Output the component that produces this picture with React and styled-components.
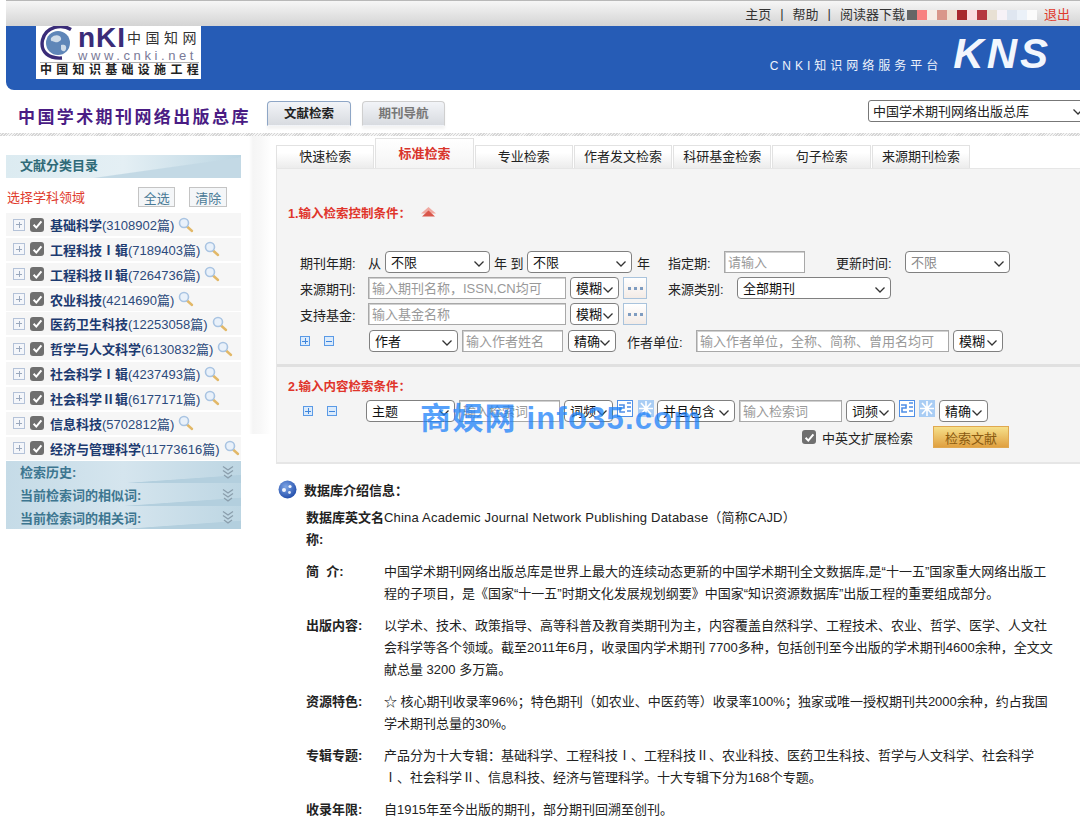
import React from 'react';
import styled, { createGlobalStyle, css } from 'styled-components';

const GlobalStyle = createGlobalStyle`
  html, body { margin: 0; padding: 0; background: #fff; }
  body {
    font-family: "Liberation Sans", "Noto Sans CJK SC", sans-serif;
    font-size: 13px;
    color: #222;
  }
  * { box-sizing: border-box; }
`;

const chevron = encodeURIComponent(
  '<svg xmlns="http://www.w3.org/2000/svg" width="12" height="8"><path d="M1.5 1.5 6 6l4.500-4.500" fill="none" stroke="#333" stroke-width="1.3"/></svg>'
);

const leftGap = css`
  margin-left: ${(p) => p.$ml || 0}px;
  flex: none;
`;

const Page = styled.div`
  position: relative;
  width: 1080px;
  height: 817px;
  overflow: hidden;
`;

// top grey strip
const TopBar = styled.div`
  height: 26px;
  border-top: 1px solid #b8b8b8;
  margin-left: 6px;
  padding-right: 10px;
  background: linear-gradient(#f6f6f6, #d4d4d4);
  display: flex;
  justify-content: flex-end;
  align-items: center;
  column-gap: 9px;
`;

const TopLink = styled.span`
  white-space: pre;
  color: ${(p) => (p.$red ? '#e03a2c' : '#333')};
`;

const Blur = styled.div`
  display: flex;
  margin: 2px -2px 0 -7px;
`;

const BlurCell = styled.i`
  display: block;
  width: 10px;
  height: 10px;
  background: ${(p) => p.$c};
`;

const Banner = styled.div`
  height: 64px;
  margin-left: 6px;
  padding: 0 29px 0 30px;
  background: #265cb6;
  border-radius: 0 0 0 8px;
  display: flex;
  align-items: flex-start;
`;

const Logo = styled.div`
  width: 165px;
  height: 53px;
  background: #fff;
  padding: 0 2px 0 4px;
`;

const LogoHead = styled.div`
  display: flex;
  height: 37px;
  border-bottom: 1px solid #b0b0b0;
`;

const LogoWords = styled.div`
  margin-left: 4px;
  flex: 1;
`;

const LogoTop = styled.div`
  display: flex;
  align-items: center;
  height: 24px;
  white-space: nowrap;
`;

const LogoMark = styled.span`
  font-weight: 700;
  font-size: 28px;
  line-height: 24px;
  color: #3a2c78;
  letter-spacing: 1px;
  width: 49px;
`;

const LogoCn = styled.span`
  font-size: 14px;
  line-height: 20px;
  color: #333;
  letter-spacing: 4.500px;
`;

const LogoUrl = styled.div`
  font-size: 13px;
  line-height: 12px;
  color: #7a7a98;
  letter-spacing: 3.600px;
  white-space: nowrap;
`;

const LogoSub = styled.div`
  font-size: 12px;
  line-height: 15px;
  color: #222;
  font-weight: 700;
  letter-spacing: 4.300px;
  white-space: nowrap;
`;

const Brand = styled.div`
  margin-left: auto;
  display: flex;
  align-items: flex-end;
  color: #eef3fb;
  height: 100%;
  padding-bottom: 15px;
`;

const BrandText = styled.span`
  font-size: 12px;
  letter-spacing: 4px;
  padding-bottom: 2px;
  margin-right: 11px;
`;

const BrandMark = styled.span`
  font-size: 42px;
  line-height: 42px;
  font-weight: 700;
  font-style: italic;
  letter-spacing: 3px;
  color: #f2f6fd;
`;

const TitleRow = styled.div`
  height: 43px;
  padding-left: 18px;
  display: flex;
  align-items: flex-start;
`;

const DbTitle = styled.h1`
  margin: 17px 0 0;
  font-size: 17px;
  line-height: 22px;
  font-weight: 700;
  letter-spacing: 2.400px;
  color: #4a1c84;
  width: 249px;
  white-space: nowrap;
`;

const NavTab = styled.div`
  width: ${(p) => (p.$on ? 84 : 83)}px;
  height: 25px;
  margin: 11px 0 0 ${(p) => (p.$on ? 0 : 11)}px;
  border: 1px solid ${(p) => (p.$on ? '#8ea6c6' : '#cfcfcf')};
  border-bottom-color: transparent;
  border-radius: 4px 4px 0 0;
  background: linear-gradient(#f2f4f8, #d8dbe0);
  box-shadow: 0 3px 3px rgba(0, 0, 0, 0.05);
  font-size: 12.5px;
  font-weight: 700;
  text-align: center;
  line-height: 24px;
  color: ${(p) => (p.$on ? '#222' : '#777')};
`;

const DbSelect = styled.select`
  appearance: none;
  margin: 10px -20px 0 auto;
  width: 232px;
  height: 22px;
  padding: 0 0 0 4px;
  border: 1px solid #777;
  border-radius: 3px;
  font: 13px "Liberation Sans", "Noto Sans CJK SC", sans-serif;
  color: #222;
  background: #fff url("data:image/svg+xml,${chevron}") no-repeat 203px 7px;
`;

const Strip = styled.div`
  height: 3px;
  background: repeating-linear-gradient(135deg, #d6d6d6 0 1px, #f4f4f4 1px 2px);
`;

const Main = styled.div`
  display: flex;
  align-items: flex-start;
`;

// left tree
const Side = styled.aside`
  width: 235px;
  margin-left: 6px;
  flex: none;
  padding-top: 19px;
`;

const SideHead = styled.div`
  height: 23px;
  padding-left: 14px;
  line-height: 22px;
  font-weight: 700;
  color: #2f6a78;
  background:
    linear-gradient(172deg, transparent 62%, #c3d9e5 64%),
    linear-gradient(90deg, #dcebf1 0%, #e4eff4 50%, #bcd6e3 100%);
`;

const PickBar = styled.div`
  display: flex;
  align-items: center;
  height: 35px;
  padding: 2px 0 0 1px;
`;

const PickTitle = styled.span`
  color: #e03a2c;
  width: 133px;
`;

const PickBtn = styled.button`
  width: 39px;
  height: 20px;
  padding: 0;
  margin-right: 14px;
  border: 1px solid #c4c4c4;
  background: #f4f6f8;
  font: 13px "Liberation Sans", "Noto Sans CJK SC", sans-serif;
  color: #4a7a96;
  &:first-of-type { margin-left: 3px; }
`;

const Tree = styled.div`
  display: grid;
  row-gap: 1.85px;
`;

const TreeRow = styled.div`
  height: 23px;
  padding-left: 7px;
  background: #f6f6f6;
  display: flex;
  align-items: center;
  white-space: nowrap;
`;

const Expand = styled.span`
  width: 12px;
  height: 12px;
  border: 1px solid #b4c2d8;
  background: #f4f6fa;
  position: relative;
  flex: none;
  margin-right: 5px;
  &::before, &::after {
    content: "";
    position: absolute;
    background: #9aa8bd;
  }
  &::before { left: 2px; right: 2px; top: 4.5px; height: 1px; }
  &::after { top: 2px; bottom: 2px; left: 4.5px; width: 1px; }
`;

const Tick = styled.span`
  ${leftGap}
  width: 14px;
  height: 14px;
  border-radius: 3px;
  background: #6f6f6f;
  display: inline-flex;
  align-items: center;
  justify-content: center;
`;

const TreeName = styled.b`
  margin-left: 6px;
  color: #1c3a70;
`;

const TreeCount = styled.span`
  color: #2c4a7c;
`;

const Accordion = styled.div`
  margin-top: 1px;
`;

const AccRow = styled.div`
  height: 22.7px;
  padding: 0 7px 0 14px;
  display: flex;
  justify-content: space-between;
  align-items: center;
  font-weight: 700;
  color: #3d7690;
  background:
    linear-gradient(176deg, transparent 78%, #b3cfde 80%),
    linear-gradient(90deg, #c5dbe7 0%, #d5e5ee 50%, #bdd6e3 100%);
`;

const Gutter = styled.div`
  width: 35px;
  height: 298px;
  flex: none;
  background: linear-gradient(90deg, #fff 8px, #f5f5f5 12px, #f8f8f8 20px, #fff 30px);
`;

// right side
const Content = styled.main`
  width: 804px;
  flex: none;
`;

const Tabs = styled.div`
  height: 32px;
  display: flex;
  align-items: flex-end;
  column-gap: 1px;
`;

const Tab = styled.div`
  width: 98.3px;
  height: ${(p) => (p.$on ? 30 : 23)}px;
  text-align: center;
  line-height: ${(p) => (p.$on ? 29 : 22)}px;
  border: 1px solid #e2e2e2;
  border-bottom: 0;
  font-weight: ${(p) => (p.$on ? 700 : 400)};
  color: ${(p) => (p.$on ? '#d9342b' : '#222')};
  background: ${(p) => (p.$on ? 'linear-gradient(#fff, #f4f4f4)' : 'linear-gradient(#fff 30%, #ececec)')};
`;

const Panel = styled.section`
  background: #f4f4f4;
  border-left: 1px solid #e6e6e6;
  border-top: 1px solid #e6e6e6;
  border-bottom: 2px solid #e6e6e6;
`;

const Part = styled.div`
  padding: ${(p) => p.$pad};
  border-bottom: ${(p) => (p.$line ? '3px solid #e0e0e0' : '0')};
`;

const PartTitle = styled.div`
  display: flex;
  align-items: center;
  height: 20px;
  margin-left: 11px;
  font-size: 12.5px;
  font-weight: 700;
  color: #e0352b;
`;

const FormRow = styled.div`
  display: flex;
  align-items: center;
  height: 22px;
  margin: ${(p) => p.$top || 4}px 0 0 23px;
  white-space: nowrap;
`;

const Label = styled.span`
  ${leftGap}
  width: ${(p) => p.$w}px;
`;

const Select = styled.select`
  ${leftGap}
  appearance: none;
  width: ${(p) => p.$w}px;
  height: 22px;
  padding: 0 0 0 5px;
  border: 1px solid #808080;
  border-radius: 4px;
  font: 13px "Liberation Sans", "Noto Sans CJK SC", sans-serif;
  color: ${(p) => (p.$dim ? '#888' : '#111')};
  background: #fff url("data:image/svg+xml,${chevron}") no-repeat calc(100% - 4px) 8px;
`;

const TextInput = styled.input`
  ${leftGap}
  width: ${(p) => p.$w}px;
  height: 22px;
  padding: 0 0 0 3px;
  border: 1px solid #a8a8a8;
  box-shadow: inset 1px 1px 0 #d0d0d0;
  font: 13px "Liberation Sans", "Noto Sans CJK SC", sans-serif;
  background: #fff;
  &::placeholder { color: #999; opacity: 1; }
`;

const DotsBtn = styled.span`
  ${leftGap}
  width: 24px;
  height: 22px;
  border: 1px solid #a9c3dc;
  background: linear-gradient(#fff, #f3ebe6);
  display: inline-flex;
  align-items: center;
  justify-content: center;
  gap: 3px;
  & i {
    width: 3px;
    height: 3px;
    background: #7f9cc0;
  }
`;

const MiniBtn = styled.span`
  ${leftGap}
  width: 10px;
  height: 10px;
  border: 1px solid #5a9ae6;
  background: #dcebfb;
  position: relative;
  &::before, &::after {
    content: "";
    position: absolute;
    background: #3f86dc;
  }
  &::before { left: 1px; right: 1px; top: 3.5px; height: 1px; }
  &::after {
    display: ${(p) => (p.$minus ? 'none' : 'block')};
    top: 1px; bottom: 1px; left: 3.5px; width: 1px;
  }
`;

const GoldBtn = styled.button`
  ${leftGap}
  width: 76px;
  height: 22px;
  padding: 0;
  border: 1px solid #e0a850;
  background: linear-gradient(#f6e08a, #e0a040);
  font: 13px "Liberation Sans", "Noto Sans CJK SC", sans-serif;
  color: #8a5a10;
`;

const Info = styled.div`
  padding-top: 14px;
`;

const InfoHead = styled.div`
  display: flex;
  align-items: center;
  height: 22px;
  margin-left: 2px;
  font-weight: 700;
  color: #222;
`;

const InfoList = styled.dl`
  margin: 7px 0 0 30px;
  display: grid;
  grid-template-columns: 78px 670px;
  row-gap: 10px;
  line-height: 22px;
  & dt { font-weight: 700; white-space: pre-wrap; }
  & dd { margin: 0; }
  & dd:first-of-type { letter-spacing: 0.2px; }
`;

const Watermark = styled.div`
  position: absolute;
  left: 420px;
  top: 402px;
  font-size: 31px;
  line-height: 34px;
  font-weight: 700;
  letter-spacing: 1.2px;
  color: rgba(30, 130, 250, 0.75);
  white-space: pre;
  pointer-events: none;
`;

function Check({ ml }) {
  return (
    <Tick $ml={ml}>
      <svg width="11" height="11" viewBox="0 0 11 11">
        <path d="M1.6 5.8 4.3 8.6 9.4 2.3" fill="none" stroke="#fff" strokeWidth="2" />
      </svg>
    </Tick>
  );
}

function Lens() {
  return (
    <svg width="16" height="16" viewBox="0 0 16 16" style={{ marginLeft: 4, flex: 'none' }}>
      <path d="M9 9.5 14 14" stroke="#e2b868" strokeWidth="2.4" strokeLinecap="round" />
      <circle cx="6" cy="6" r="4.5" fill="#e9f1fa" stroke="#a9c4e2" strokeWidth="1.6" />
    </svg>
  );
}

function DoubleDown() {
  return (
    <svg width="12" height="14" viewBox="0 0 12 14">
      <path d="M1 1.5 6 5l5-3.500M1 5.500 6 9l5-3.500M2 10 6 13l4-3" fill="none" stroke="#8a9eac" strokeWidth="1.3" />
    </svg>
  );
}

function Fold() {
  return (
    <svg width="15" height="10" viewBox="0 0 15 10" style={{ marginLeft: 10 }}>
      <path d="M7.5 0 15 6.500H0z" fill="#f0a8a0" />
      <path d="M7.5 3.400 14 9.500H1z" fill="#d9564a" />
    </svg>
  );
}

function Tile({ ml, kind }) {
  return (
    <svg width="16" height="17" viewBox="0 0 16 17" style={{ marginLeft: ml, marginTop: -6, flex: 'none' }}>
      <rect width="16" height="17" fill={kind === 'a' ? '#fff' : '#a9cdf4'} />
      {kind === 'a' ? (
        <>
          <rect x=".5" y=".5" width="15" height="16" fill="none" stroke="#4f8fe6" />
          <path d="M2 5h5v3H3v4h5M10 3h4M10 7h4M10 11h4" fill="none" stroke="#4f8fe6" strokeWidth="1.6" />
        </>
      ) : (
        <path d="M8 1v15M1 8.500h14M3 3l10 11M13 3 3 14" stroke="#fff" strokeWidth="1.6" />
      )}
    </svg>
  );
}

function Globe() {
  return (
    <svg width="19" height="19" viewBox="0 0 19 19" style={{ marginRight: 7 }}>
      <defs>
        <radialGradient id="ball" cx="40%" cy="35%" r="70%">
          <stop offset="0" stopColor="#7fa6e6" />
          <stop offset="1" stopColor="#1f4aa8" />
        </radialGradient>
      </defs>
      <circle cx="9.500" cy="9.500" r="9" fill="url(#ball)" />
      <circle cx="6" cy="10" r="2" fill="#f2f6fd" />
      <circle cx="12" cy="6.500" r="1.600" fill="#f2f6fd" />
      <circle cx="11.500" cy="12.500" r="1.400" fill="#dfe9f8" />
    </svg>
  );
}

function LogoGlobe() {
  return (
    <svg width="34" height="34" viewBox="0 0 34 34" style={{ flex: 'none' }}>
      <circle cx="18" cy="17" r="12" fill="#5f86b8" />
      <path d="M11 12c4-4 9-3 10 0s-4 5-6 4-5 0-4-4zM21 19c3-1 6 0 5 4s-5 2-5 0z" fill="#cfdbe8" />
      <path d="M31 3.500C22-2 6 0 2.500 14 0 26 9 33 22 32" fill="none" stroke="#3a2c78" strokeWidth="3.400" />
    </svg>
  );
}

const blurCells = ['#666', '#f88080', '#f6ece6', '#d9968a', '#f0dfd0', '#a8282c', '#fbdde0', '#b43840', '#e8e0d4', '#f7f2f7', '#dfe6f0', '#ebf1f8', '#fbfbfb'];

const subjects = [
  ['基础科学', '(3108902篇)'],
  ['工程科技Ⅰ辑', '(7189403篇)'],
  ['工程科技Ⅱ辑', '(7264736篇)'],
  ['农业科技', '(4214690篇)'],
  ['医药卫生科技', '(12253058篇)'],
  ['哲学与人文科学', '(6130832篇)'],
  ['社会科学Ⅰ辑', '(4237493篇)'],
  ['社会科学Ⅱ辑', '(6177171篇)'],
  ['信息科技', '(5702812篇)'],
  ['经济与管理科学', '(11773616篇)'],
];

const tabs = ['快速检索', '标准检索', '专业检索', '作者发文检索', '科研基金检索', '句子检索', '来源期刊检索'];

const intro = [
  ['数据库英文名称:', 'China Academic Journal Network Publishing Database（简称CAJD）'],
  ['简  介:', '中国学术期刊网络出版总库是世界上最大的连续动态更新的中国学术期刊全文数据库,是“十一五”国家重大网络出版工程的子项目，是《国家“十一五”时期文化发展规划纲要》中国家“知识资源数据库”出版工程的重要组成部分。'],
  ['出版内容:', '以学术、技术、政策指导、高等科普及教育类期刊为主，内容覆盖自然科学、工程技术、农业、哲学、医学、人文社会科学等各个领域。截至2011年6月，收录国内学术期刊 7700多种，包括创刊至今出版的学术期刊4600余种，全文文献总量 3200 多万篇。'],
  ['资源特色:', '☆ 核心期刊收录率96%；特色期刊（如农业、中医药等）收录率100%；独家或唯一授权期刊共2000余种，约占我国学术期刊总量的30%。'],
  ['专辑专题:', '产品分为十大专辑：基础科学、工程科技Ⅰ、工程科技Ⅱ、农业科技、医药卫生科技、哲学与人文科学、社会科学Ⅰ、社会科学Ⅱ、信息科技、经济与管理科学。十大专辑下分为168个专题。'],
  ['收录年限:', '自1915年至今出版的期刊，部分期刊回溯至创刊。'],
];

function Opt({ w, ml, text, dim }) {
  return (
    <Select $w={w} $ml={ml} $dim={dim} defaultValue={text}>
      <option>{text}</option>
    </Select>
  );
}

function Dots({ ml }) {
  return (
    <DotsBtn $ml={ml}>
      <i />
      <i />
      <i />
    </DotsBtn>
  );
}

export default function App() {
  return (
    <Page>
      <GlobalStyle />
      <TopBar>
        <TopLink>主页</TopLink>
        <TopLink>|</TopLink>
        <TopLink>帮助</TopLink>
        <TopLink>|</TopLink>
        <TopLink>阅读器下载</TopLink>
        <Blur>
          {blurCells.map((c, i) => (
            <BlurCell key={i} $c={c} />
          ))}
        </Blur>
        <TopLink $red>退出</TopLink>
      </TopBar>

      <Banner>
        <Logo>
          <LogoHead>
            <LogoGlobe />
            <LogoWords>
              <LogoTop>
                <LogoMark>nKI</LogoMark>
                <LogoCn>中国知网</LogoCn>
              </LogoTop>
              <LogoUrl>www.cnki.net</LogoUrl>
            </LogoWords>
          </LogoHead>
          <LogoSub>中国知识基础设施工程</LogoSub>
        </Logo>
        <Brand>
          <BrandText>CNKI知识网络服务平台</BrandText>
          <BrandMark>KNS</BrandMark>
        </Brand>
      </Banner>

      <TitleRow>
        <DbTitle>中国学术期刊网络出版总库</DbTitle>
        <NavTab $on>文献检索</NavTab>
        <NavTab>期刊导航</NavTab>
        <DbSelect defaultValue="a">
          <option value="a">中国学术期刊网络出版总库</option>
        </DbSelect>
      </TitleRow>
      <Strip />

      <Main>
        <Side>
          <SideHead>文献分类目录</SideHead>
          <PickBar>
            <PickTitle>选择学科领域</PickTitle>
            <PickBtn>全选</PickBtn>
            <PickBtn>清除</PickBtn>
          </PickBar>
          <Tree>
            {subjects.map(([name, count]) => (
              <TreeRow key={name}>
                <Expand />
                <Check />
                <TreeName>{name}</TreeName>
                <TreeCount>{count}</TreeCount>
                <Lens />
              </TreeRow>
            ))}
          </Tree>
          <Accordion>
            {['检索历史:', '当前检索词的相似词:', '当前检索词的相关词:'].map((t) => (
              <AccRow key={t}>
                {t}
                <DoubleDown />
              </AccRow>
            ))}
          </Accordion>
        </Side>
        <Gutter />

        <Content>
          <Tabs>
            {tabs.map((t, i) => (
              <Tab key={t} $on={i === 1}>
                {t}
              </Tab>
            ))}
          </Tabs>
          <Panel>
            <Part $pad="33px 0 12px" $line>
              <PartTitle>
                1.输入检索控制条件：
                <Fold />
              </PartTitle>
              <FormRow $top={29}>
                <Label $w={68}>期刊年期:</Label>
                <Label $w={17}>从</Label>
                <Opt w={105} text="不限" />
                <Label $ml={4} $w={33}>年 到</Label>
                <Opt w={105} text="不限" />
                <Label $ml={5} $w={31}>年</Label>
                <Label $w={56}>指定期:</Label>
                <TextInput $w={81} placeholder="请输入" />
                <Label $ml={31} $w={69}>更新时间:</Label>
                <Opt w={105} text="不限" dim />
              </FormRow>
              <FormRow>
                <Label $w={68}>来源期刊:</Label>
                <TextInput $w={198} placeholder="输入期刊名称，ISSN,CN均可" />
                <Opt ml={4} w={49} text="模糊" />
                <Dots ml={4} />
                <Label $ml={21} $w={69}>来源类别:</Label>
                <Opt w={154} text="全部期刊" />
              </FormRow>
              <FormRow>
                <Label $w={68}>支持基金:</Label>
                <TextInput $w={198} placeholder="输入基金名称" />
                <Opt ml={4} w={49} text="模糊" />
                <Dots ml={4} />
              </FormRow>
              <FormRow $top={5}>
                <MiniBtn />
                <MiniBtn $ml={14} $minus />
                <Opt ml={35} w={89} text="作者" />
                <TextInput $ml={4} $w={101} placeholder="输入作者姓名" />
                <Opt ml={5} w={48} text="精确" />
                <Label $ml={11} $w={69}>作者单位:</Label>
                <TextInput $w={253} placeholder="输入作者单位，全称、简称、曾用名均可" />
                <Opt ml={4} w={50} text="模糊" />
              </FormRow>
            </Part>
            <Part $pad="8px 0 14px">
              <PartTitle>2.输入内容检索条件：</PartTitle>
              <FormRow $top={5}>
                <MiniBtn $ml={3} />
                <MiniBtn $ml={14} $minus />
                <Opt ml={29} w={89} text="主题" />
                <TextInput $ml={4} $w={101} placeholder="输入检索词" />
                <Opt ml={4} w={49} text="词频" />
                <Tile ml={4} kind="a" />
                <Tile ml={5} kind="b" />
                <Opt ml={3} w={78} text="并且包含" />
                <TextInput $ml={4} $w={103} placeholder="输入检索词" />
                <Opt ml={4} w={49} text="词频" />
                <Tile ml={4} kind="a" />
                <Tile ml={4} kind="b" />
                <Opt ml={4} w={49} text="精确" />
              </FormRow>
              <FormRow>
                <Check ml={502} />
                <Label $ml={6} $w={111}>中英文扩展检索</Label>
                <GoldBtn>检索文献</GoldBtn>
              </FormRow>
            </Part>
          </Panel>

          <Info>
            <InfoHead>
              <Globe />
              数据库介绍信息：
            </InfoHead>
            <InfoList>
              {intro.map(([k, v]) => (
                <React.Fragment key={k}>
                  <dt>{k}</dt>
                  <dd>{v}</dd>
                </React.Fragment>
              ))}
            </InfoList>
          </Info>
        </Content>
      </Main>

      <Watermark>商娱网 info35.com</Watermark>
    </Page>
  );
}
